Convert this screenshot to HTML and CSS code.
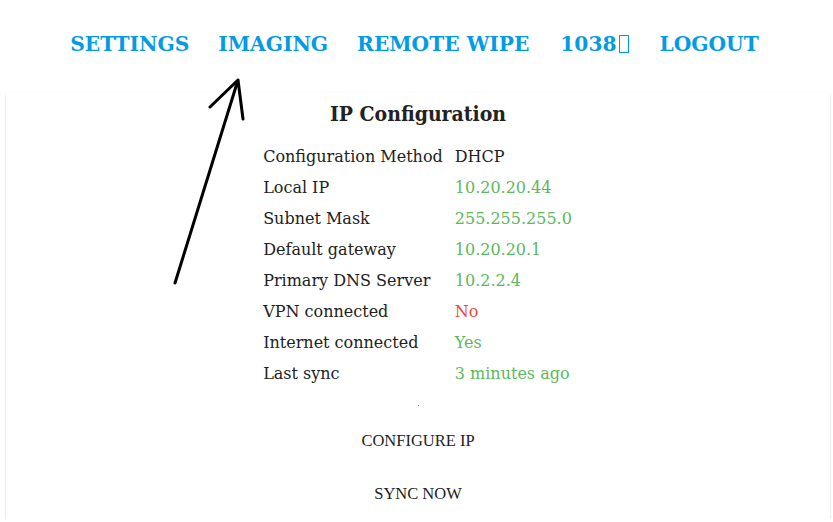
FILE: index.html
```html
<!DOCTYPE html>
<html lang="en">
<head>
    <meta charset="UTF-8">
    <meta name="viewport" content="width=device-width, initial-scale=1.0">
    <title>IP Configuration</title>
    <link rel="stylesheet" href="styles.css">
</head>
<body>
    <nav class="menu">
        <a href="#">SETTINGS</a>
        <a href="#">IMAGING</a>
        <a href="#">REMOTE WIPE</a>
        <a href="#" class="user">1038<span class="tofu"></span></a>
        <a href="#">LOGOUT</a>
    </nav>
    <div class="card">
        <h2>IP Configuration</h2>
        <table class="info">
            <tr><td>Configuration Method</td><td>DHCP</td></tr>
            <tr><td>Local IP</td><td class="ok">10.20.20.44</td></tr>
            <tr><td>Subnet Mask</td><td class="ok">255.255.255.0</td></tr>
            <tr><td>Default gateway</td><td class="ok">10.20.20.1</td></tr>
            <tr><td>Primary DNS Server</td><td class="ok">10.2.2.4</td></tr>
            <tr><td>VPN connected</td><td class="bad">No</td></tr>
            <tr><td>Internet connected</td><td class="ok">Yes</td></tr>
            <tr><td>Last sync</td><td class="ok">3 minutes ago</td></tr>
        </table>
        <div class="dot"></div>
        <button class="flat">CONFIGURE IP</button>
        <button class="flat">SYNC NOW</button>
    </div>
    <svg class="arrow" width="833" height="522" viewBox="0 0 833 522">
        <path d="M175 283 L238 80 M210 107 L238 80 L243 119" fill="none" stroke="#000" stroke-width="3" stroke-linecap="round" stroke-linejoin="round"/>
    </svg>
</body>
</html>
```

FILE: styles.css
```css
body {
    margin: 0;
    background-color: white;
    font-family: "DejaVu Serif", serif;
    color: #222;
}
.menu {
    height: 93px;
    display: flex;
    justify-content: center;
    align-items: center;
    gap: 29px;
    padding: 0 4px 6px 0;
    box-sizing: border-box;
}
.menu a {
    color: #039be5;
    font-weight: bold;
    font-size: 20.2px;
    text-decoration: none;
    display: flex;
    align-items: center;
}
.menu a.user {
    margin: 0 2px;
}
.tofu {
    display: inline-block;
    width: 10px;
    height: 18px;
    border: 1.5px solid #039be5;
    box-sizing: border-box;
    margin-left: 2px;
}
.card {
    margin: 0 3px 0 6px;
    height: 426px;
    box-sizing: border-box;
    background: white;
    box-shadow: 0 2px 2px rgba(0, 0, 0, 0.16), 0 0 1px rgba(0, 0, 0, 0.08);
    display: flex;
    flex-direction: column;
    align-items: center;
    padding-top: 8px;
}
h2 {
    margin: 0 0 15px;
    font-family: "DejaVu Serif Condensed", "DejaVu Serif", serif;
    font-weight: bold;
    font-size: 21px;
    color: #222;
}
.info {
    border-collapse: collapse;
    font-size: 16px;
    margin-left: -1px;
}
.info td {
    padding: 0;
    height: 31px;
    white-space: nowrap;
}
.info td:first-child {
    padding-right: 12px;
}
.ok {
    color: #5cb85c;
}
.bad {
    color: #e74c3c;
}
.dot {
    width: 1px;
    height: 1px;
    background: #999;
    margin: 16px 0 0;
}
.flat {
    background: none;
    border: none;
    font-family: "Liberation Serif", serif;
    font-size: 16.5px;
    color: #222;
    padding: 0;
    height: 52px;
    cursor: pointer;
}
.flat:first-of-type {
    margin-top: 10px;
}
.flat:last-of-type {
    margin-top: 1px;
}
.arrow {
    position: absolute;
    left: 0;
    top: 0;
    pointer-events: none;
}
```
